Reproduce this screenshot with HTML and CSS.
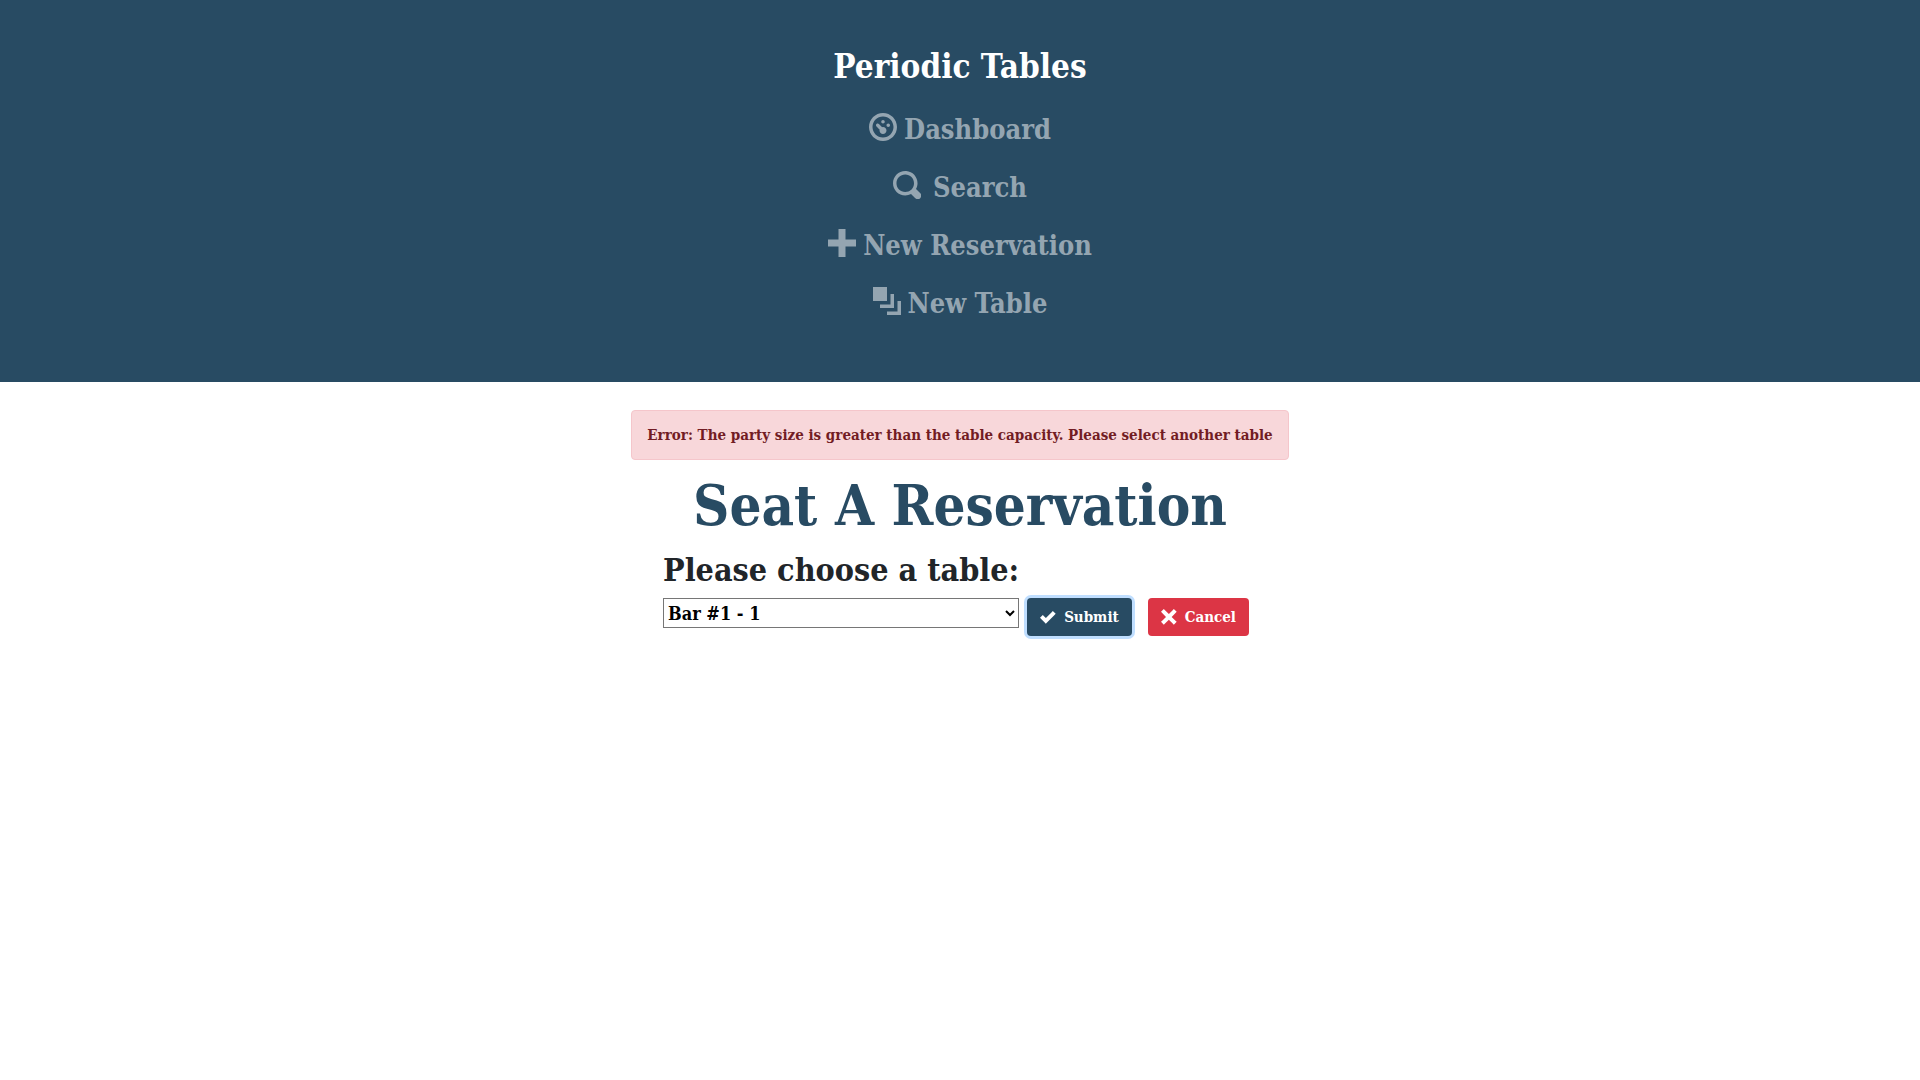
FILE: index.html
```html
<!DOCTYPE html>
<html lang="en">
<head>
<meta charset="utf-8">
<meta name="viewport" content="width=device-width, initial-scale=1">
<title>Periodic Tables</title>
<link rel="stylesheet" href="styles.css">
</head>
<body>
<header class="site-header">
  <a class="brand" href="#">Periodic Tables</a>
  <nav class="menu" aria-label="Main">
    <a class="menu-link" href="#"><svg class="icon" viewBox="0 0 8 8" aria-hidden="true"><path d="M4 0c-2.2 0-4 1.8-4 4s1.8 4 4 4 4-1.8 4-4-1.8-4-4-4zm0 1c1.66 0 3 1.34 3 3s-1.34 3-3 3-3-1.34-3-3 1.34-3 3-3zm0 1c-.28 0-.5.22-.5.5s.22.5.5.5.5-.22.5-.5-.22-.5-.5-.5zm-1.66 1a.5.5 0 0 0-.19.84l.91.91c-.02.08-.06.16-.06.25 0 .55.45 1 1 1s1-.45 1-1-.45-1-1-1c-.09 0-.17.04-.25.06l-.91-.91a.5.5 0 0 0-.44-.16.5.5 0 0 0-.06 0zm3.16 0c-.28 0-.5.22-.5.5s.22.5.5.5.5-.22.5-.5-.22-.5-.5-.5z"/></svg><span>Dashboard</span></a>
    <a class="menu-link menu-link-wide" href="#"><svg class="icon" viewBox="0 0 8 8" aria-hidden="true"><path d="M3.5 0c-1.93 0-3.5 1.57-3.5 3.5s1.57 3.5 3.5 3.5c.59 0 1.17-.14 1.66-.41a1 1 0 0 0 .13.13l1 1a1.02 1.02 0 1 0 1.44-1.44l-1-1a1 1 0 0 0-.16-.13c.27-.49.44-1.06.44-1.66 0-1.93-1.55-3.5-3.5-3.5zm0 1c1.39 0 2.5 1.11 2.5 2.5 0 .66-.24 1.27-.66 1.72-.01.01-.02.02-.03.03a1 1 0 0 0-.13.13c-.44.4-1.04.63-1.69.63-1.39 0-2.5-1.11-2.5-2.5s1.11-2.5 2.5-2.5z"/></svg><span>Search</span></a>
    <a class="menu-link" href="#"><svg class="icon" viewBox="0 0 8 8" aria-hidden="true"><path d="M3 0v3h-3v2h3v3h2v-3h3v-2h-3v-3h-2z"/></svg><span>New Reservation</span></a>
    <a class="menu-link" href="#"><svg class="icon" viewBox="0 0 8 8" aria-hidden="true"><path d="M0 0v4h4v-4h-4zm5 2v3h-3v1h4v-4h-1zm2 2v3h-3v1h4v-4h-1z"/></svg><span>New Table</span></a>
  </nav>
</header>
<main class="content">
  <div class="alert" role="alert">Error: The party size is greater than the table capacity. Please select another table</div>
  <h1 class="title">Seat A Reservation</h1>
  <form class="seat-form">
    <label class="seat-label" for="table">Please choose a table:</label>
    <select class="seat-select" id="table"><option>Bar #1 - 1</option></select>
    <div class="actions">
      <button class="btn btn-submit" type="button"><svg class="btn-icon" viewBox="0 0 8 8" aria-hidden="true"><path transform="translate(0 1)" d="M6.41 0l-.69.72-2.78 2.78-.81-.78-.72-.72-1.41 1.41.72.72 1.5 1.5.69.72.72-.72 3.5-3.5.72-.72-1.44-1.41z"/></svg><span>Submit</span></button>
      <button class="btn btn-cancel" type="button"><svg class="btn-icon" viewBox="0 0 8 8" aria-hidden="true"><path d="M1.41 0l-1.41 1.41.72.72 1.78 1.81-1.78 1.78-.72.69 1.41 1.44.72-.72 1.81-1.81 1.78 1.81.69.72 1.44-1.44-.72-.69-1.81-1.78 1.81-1.81.72-.72-1.44-1.41-.69.72-1.78 1.78-1.81-1.78-.72-.72z"/></svg><span>Cancel</span></button>
    </div>
  </form>
</main>
</body>
</html>
```
FILE: styles.css
```css
* { box-sizing: border-box; }

body {
  margin: 0;
  background: #fff;
  color: #212529;
  font-family: "Roboto Slab", "DejaVu Serif Condensed", "DejaVu Serif", serif;
  font-weight: 700;
  font-size: 15px;
  line-height: 24px;
}

.site-header {
  display: flex;
  flex-direction: column;
  align-items: center;
  padding: 40px 16px 49px;
  background: #284b63;
}

.brand {
  color: #fff;
  font-size: 33px;
  line-height: 53px;
  text-decoration: none;
}

.menu {
  display: flex;
  flex-direction: column;
  align-items: center;
  padding-top: 8px;
}

.menu-link {
  display: flex;
  align-items: center;
  gap: 7px;
  height: 58px;
  color: #94a5b1;
  font-size: 27px;
  text-decoration: none;
}

.menu-link-wide { gap: 12px; }

.icon {
  width: 28px;
  height: 28px;
  margin-bottom: 6px;
  fill: currentColor;
}

.content {
  display: flex;
  flex-direction: column;
  align-items: center;
  padding: 28px 16px;
}

.alert {
  padding: 12px 15px;
  border: 1px solid #f5c6cb;
  border-radius: 4px;
  background: #f8d7da;
  color: #721c24;
}

.title {
  margin: 8px 0;
  color: #284b63;
  font-size: 56px;
  line-height: 74px;
}

.seat-form {
  display: grid;
  grid-template-columns: auto auto;
  column-gap: 8px;
  padding-right: 8px;
}

.seat-label {
  grid-column: 1;
  font-size: 32px;
  line-height: 40px;
  margin-bottom: 8px;
}

.seat-select {
  grid-row: 2;
  width: 100%;
  height: 30px;
  padding: 0;
  border: 1px solid #767676;
  border-radius: 0;
  background: #fff;
  color: #000;
  font: inherit;
  font-size: 18px;
}

.actions {
  grid-row: 2;
  display: flex;
  gap: 16px;
}

.btn {
  display: flex;
  align-items: center;
  gap: 8px;
  height: 38px;
  padding: 0 13px;
  border: 0;
  border-radius: 4px;
  color: #fff;
  font: inherit;
}

.btn-submit {
  background: #284b63;
  box-shadow: 0 0 0 3px #bfdeff;
}

.btn-cancel { background: #dc3545; }

.btn-icon {
  width: 16px;
  height: 16px;
  fill: currentColor;
}
```
